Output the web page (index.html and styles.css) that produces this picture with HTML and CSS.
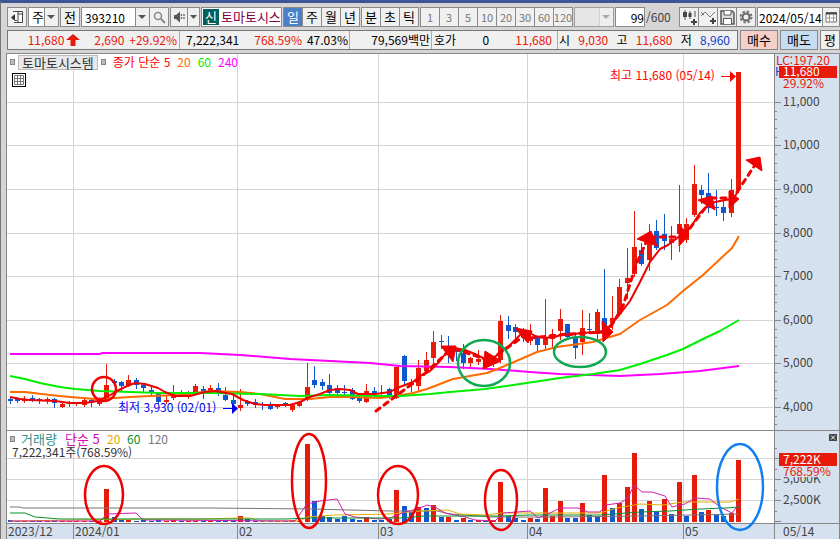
FILE: index.html
```html
<!DOCTYPE html>
<html lang="ko">
<head>
  <meta charset="UTF-8" />
  <meta name="viewport" content="width=device-width, initial-scale=1.0" />
  <title>토마토시스템 차트</title>
  <link rel="stylesheet" href="styles.css">
</head>
<body>

<div class="toolbar">
  <button class="icon-btn w20" aria-label="패널 접기"><svg width="14" height="14" viewBox="0 0 14 14"><path d="M3 1.5H12.5V12.5H4" fill="#fff" stroke="#444"/><path d="M8 1.5V12M8 4h4" stroke="#444" fill="none"/><path d="M5 4v7L1 7.500z" fill="#333"/><path d="M5 10.500h2" stroke="#444"/></svg></button>
  <span class="combo w31"><select aria-label="종목 구분"><option>주</option></select></span>
  <button class="btn w20">전</button>
  <span class="group">
    <span class="combo w69"><input type="text" value="393210" aria-label="종목코드" /></span><button class="icon-btn w20" aria-label="종목 검색"><svg width="13" height="13" viewBox="0 0 13 13"><circle cx="5" cy="5" r="3.500" fill="none" stroke="#888" stroke-width="1.500"/><path d="M8 8l4 4" stroke="#888" stroke-width="2"/></svg></button>
  </span>
  <span class="group">
    <button class="icon-btn w18" aria-label="소리"><svg width="13" height="12" viewBox="0 0 13 12"><path d="M1 4h2l4-3.500v11L3 8H1z" fill="#555"/><path d="M8.500 3v6M11 3v6" stroke="#777" stroke-width="1.500" stroke-dasharray="2 1"/></svg></button><button class="icon-btn w11" aria-label="소리 설정"><svg width="7" height="4" viewBox="0 0 7 4"><path d="M0 0h7L3.500 4z" fill="#555"/></svg></button>
  </span>
  <div class="stock-name"><b>신</b><span>토마토시스</span></div>
  <span class="group">
    <button class="btn w20 on">일</button><button class="btn w20">주</button><button class="btn w20">월</button><button class="btn w20">년</button>
  </span>
  <span class="group">
    <button class="btn w20">분</button><button class="btn w20">초</button><button class="btn w20">틱</button>
  </span>
  <span class="group minutes">
    <button class="btn w20">1</button><button class="btn w20">3</button><button class="btn w20">5</button><button class="btn w20">10</button><button class="btn w20">20</button><button class="btn w20">30</button><button class="btn w20">60</button><button class="btn w20">120</button>
  </span>
  <span class="combo w40 off"><select aria-label="분 선택" disabled><option></option></select></span>
  <input class="count" type="text" value="99" aria-label="봉 개수" />
  <span class="total">/600</span>
  <span class="group">
    <button class="icon-btn w20" aria-label="차트 추가"><svg width="15" height="15" viewBox="0 0 15 15"><path d="M3 0v10M8 1v8M13 1v6" stroke="#555"/><path d="M1 2h4v5H1zM6.500 3h3v4h-3z" fill="#444"/><path d="M12 9v6M9 12h6" stroke="#444" stroke-width="2"/></svg></button><button class="icon-btn w20" aria-label="지표 추가"><svg width="15" height="15" viewBox="0 0 15 15"><path d="M0 6l4-4 5 5 5-5M0 2l3 3" stroke="#777" fill="none"/><path d="M12 8v6M9 11h6" stroke="#444" stroke-width="2"/></svg></button><button class="icon-btn w20" aria-label="저장"><svg width="15" height="15" viewBox="0 0 15 15"><path d="M1 1h11l2 2v11H1z" fill="#ddd" stroke="#555" stroke-width="1.500"/><path d="M4 1v4h7V1M3.500 14V8.500h8V14" fill="#fff" stroke="#555"/></svg></button><button class="icon-btn w20" aria-label="설정"><svg width="14" height="14" viewBox="0 0 14 14"><circle cx="7" cy="7" r="5.500" fill="none" stroke="#777" stroke-width="2" stroke-dasharray="2.500 1.820"/><circle cx="7" cy="7" r="3.500" fill="none" stroke="#666" stroke-width="2"/></svg></button>
  </span>
  <span class="group grow">
    <input class="date" type="text" value="2024/05/14" aria-label="날짜" /><button class="icon-btn w18" aria-label="달력"><svg width="13" height="12" viewBox="0 0 13 12"><path d="M1 1.500h10.500v9.500H1z" fill="#fff" stroke="#777"/><path d="M1 2.500h11" stroke="#444" stroke-width="2"/><path d="M1 7h11M4.500 3v8M8.500 3v8" stroke="#999"/></svg></button>
  </span>
</div>

<div class="quote">
  <div class="cells">
    <div class="cell price up"><span>11,680</span><svg width="14" height="12" viewBox="0 0 14 12"><path d="M7 0l7 6H9.500v6h-5V6H0z" fill="#e81a0a"/></svg><span class="diff">2,690</span><span>+29.92%</span></div>
    <div class="cell volume"><span>7,222,341</span><span class="up">768.59%</span><span>47.03%</span></div>
    <div class="cell amount"><span>79,569백만</span></div>
    <div class="cell hoga"><span>호가</span><span>0</span><span class="up">11,680</span></div>
    <div class="cell ohl"><span>시</span><span class="up">9,030</span><span>고</span><span class="up">11,680</span><span>저</span><span class="down">8,960</span></div>
  </div>
  <button class="trade buy">매수</button>
  <button class="trade sell">매도</button>
  <button class="trade avg">평</button>
</div>

<div class="chart">
  <svg id="chart" viewBox="7 54 833 485" role="img" aria-label="일봉 차트"></svg>
  <div class="legend">
    <i class="dot"></i><span class="tag">토마토시스템</span><i class="dot"></i>
    <span class="c-red">종가 단순 5</span><span class="c-orange">20</span><span class="c-lime">60</span><span class="c-pink">240</span>
  </div>
  <button class="grid-btn" aria-label="표 보기"><svg width="10" height="10" viewBox="0 0 10 10"><path d="M.500.500h9v9h-9zM.500 3.500h9M.500 6.500h9M3.500.500v9M6.500.500v9" fill="#fff" stroke="#777"/></svg></button>
</div>

<script src="chart.js"></script>
</body>
</html>
```
FILE: styles.css
```css
* { box-sizing: border-box; }
body {
  margin: 0;
  padding-left: 6px;
  background: #d6d4d4;
  border-top: 3px solid #3c5596;
  border-left: 1px solid #777;
  font-family: "Noto Sans CJK KR", sans-serif;
  font-size: 12px;
  line-height: 16px;
  color: #000;
  overflow: hidden;
}
button, input, select {
  margin: 0;
  padding: 0;
  font: inherit;
  color: inherit;
  border: 1px solid #8a8a8a;
  border-radius: 0;
  background: #f0f0f0;
}
svg { display: block; }

/* toolbar */
.toolbar { display: flex; gap: 1px; padding-top: 4px; height: 24px; }
.toolbar > * { height: 20px; flex: none; }
.group { display: flex; }
.group > * { height: 20px; }
.group > * + * { margin-left: -1px; }
.icon-btn { display: flex; align-items: center; justify-content: center; flex: none; }
.btn { font-size: 13px; text-align: center; white-space: nowrap; }
.btn.on { background: #4a80c8; color: #fff; }
.w11 { width: 13px; }
.w18 { width: 18px; }
.w20 { width: 20px; }
.w31 { width: 31px; font-size: 13px; }
.w40 { width: 40px; }
.w69 { width: 69px; }
.minutes { color: #777; }
.minutes .btn { display: flex; align-items: center; justify-content: center; font-size: 11px; }
.combo { position: relative; display: block; }
.combo select, .combo input {
  width: 100%;
  height: 20px;
  padding-left: 3px;
  background: #fff;
  appearance: none;
}
.combo::before {
  content: "";
  position: absolute;
  top: 1px; right: 1px; bottom: 1px;
  width: 13px;
  background: #f0f0f0;
  border-left: 1px solid #8a8a8a;
}
.combo::after {
  content: "";
  position: absolute;
  top: 8px; right: 4px;
  border: 4px solid transparent;
  border-top-color: #555;
  border-bottom: 0;
}
.combo.off select { background: #eee; }
.combo.off::after { border-top-color: #aaa; }
.stock-name {
  display: flex;
  width: 81px;
  padding: 1px 0 1px 1px;
  overflow: hidden;
  white-space: nowrap;
  background: #fff;
  border: 1px solid #8a8a8a;
  color: #800040;
  font-size: 13px;
}
.stock-name b { width: 16px; margin-right: 2px; background: #006060; color: #fff; font-weight: 400; text-align: center; }
.count { width: 30px; background: #fff; text-align: right; }
.total { width: 32px; padding-top: 2px; color: #444; }
.toolbar .grow { flex: 1; min-width: 0; }
.date { flex: 1; min-width: 0; padding-left: 1px; background: #fff; }

/* quote row */
.quote { display: flex; gap: 2px; height: 26px; padding-top: 3px; }
.quote > * { height: 20px; }
.cells { display: flex; flex: 1; background: #f0f0f0; border: 1px solid #777; line-height: 18px; white-space: nowrap; }
.cell { display: flex; align-items: center; justify-content: flex-end; border-right: 1px solid #aaa; }
.cell:last-child { border-right: 0; }
.price { width: 172px; padding-right: 2px; gap: 2px; }
.diff { margin-left: 12px; margin-right: 3px; }
.volume { width: 170px; padding-right: 1px; gap: 5px; }
.volume .up { margin-left: 10px; }
.amount { width: 82px; padding-right: 1px; }
.hoga { width: 126px; padding: 0 5px 0 2px; justify-content: space-between; }
.ohl { flex: 1; padding: 0 7px 0 1px; justify-content: space-between; }
.up { color: #e81a0a; }
.down { color: #1040c8; }
.trade { width: 38px; font-size: 13px; }
.trade.buy { background: #f5cfca; }
.trade.sell { background: #c5dcf3; }
.trade.avg { width: 20px; }

/* chart */
.chart { position: relative; background: #fff; border-top: 1px solid #888; border-left: 1px solid #888; margin-left: -1px; }
#chart { width: 100%; height: auto; }
#chart text { font-size: 12px; }
#chart .ko { font-size: 13px; }
.legend { position: absolute; top: 0; left: 3px; display: flex; align-items: center; gap: 7px; height: 16px; white-space: nowrap; }
.dot { width: 5px; height: 6px; background: #bbb; border: 1px solid #888; }
.tag { margin: 0 -4px; padding: 0 3px; font-size: 13px; line-height: 13px; background: #e8e8e8; border: 1px solid #bbb; color: #333; }
.c-red { color: #f00; }
.c-orange { color: #ff6a00; }
.c-lime { color: #0e0; }
.c-pink { color: #f0f; }
.grid-btn { position: absolute; top: 19px; left: 5px; width: 14px; height: 14px; padding: 1px; border-color: #000; background: #fff; }
```
FILE: chart.js
```javascript
const RED = "#e81a0a", BLUE = "#1058d0";

// color, high, body top, body bottom, low
const candles = `b397,399,401,403 b397,399,401,402 r396,399,401,402 b395,398,401,401 b398,399,400,403 r397,399,400,403
b398,399,403,407 r403,404,407,407 r401,403,404,406 r402,403,404,405 r398,400,405,406 b399,400,403,406 r397,400,404,405
r364,385,400,401 b379,381,383,385 b381,382,386,390 r375,380,385,386 b378,380,385,388 b384,385,388,391 b386,390,393,395
b392,393,402,403 r395,400,402,403 r385,393,398,399 b390,392,395,396 r391,392,397,398 r384,386,392,393 b386,389,394,398
r385,388,391,393 b383,388,394,395 b387,395,400,400 b395,400,404,409 r389,405,408,410 b400,401,404,405 b399,402,405,407
b402,404,405,409 b402,404,409,409 r404,405,407,408 b402,403,405,406 r403,405,410,411 r401,402,406,406 r363,387,400,400
b366,380,385,387 b379,382,386,389 b374,385,393,394 b385,388,393,395 b385,392,393,396 b388,390,399,399 b395,397,401,402
r384,391,402,402 b387,391,394,396 b385,393,394,397 b388,389,397,398 r365,367,398,398 b355,356,381,384 b379,383,385,391
r360,368,386,391 r352,360,371,372 r331,342,358,362 b335,341,342,348 b336,346,354,362 b348,351,352,360 b344,353,363,368
r357,358,363,367 r350,359,362,364 b356,358,366,368 r356,358,364,366 r315,321,360,362 b316,325,331,338 b324,327,332,338
b328,332,337,341 r324,337,341,344 b336,337,345,351 r299,337,345,348 r329,334,339,347 r309,319,331,339 b324,324,337,338
b335,337,348,358 r310,328,342,354 b313,329,330,333 r309,312,334,339 b269,318,330,333 r296,318,323,329 r279,287,314,315
r248,278,283,298 r211,247,274,276 b243,250,264,265 r224,240,260,270 b220,231,248,249 b214,234,241,249 r226,239,243,259
r185,224,234,251 r218,224,240,242 r165,184,215,216 b185,190,195,203 b173,193,208,212 b190,207,208,215 b200,207,213,220
r179,190,213,216 r72,72,190,192`.split(/\s+/);

// volume bar heights
const volumes = [2,1,1,1,1,1,2,1,1,1,1,1,1,33,5,2,2,1,2,1,2,1,2,1,1,1,1,1,1,2,2,6,3,1,1,1,1,1,2,1,
  78,21,6,5,3,6,3,2,5,2,2,3,32,16,10,15,14,17,5,5,2,4,2,2,1,2,40,6,4,2,4,3,34,6,21,4,4,19,7,6,
  47,14,19,35,69,13,21,10,23,8,40,6,47,10,12,7,6,9,62];

// days whose volume bar has the other color than the candle
const flipped = [56, 59, 61, 62, 79, 80, 81, 88, 89, 91, 94];

const lines = [
  ["#f0f", 2, "10,354 100,354 102,353 200,353 240,355 290,359 330,361 370,363 400,366 450,367 490,369 530,372 560,374 620,376 660,374 700,371 739,366"],
  ["#ff6a00", 2, "10,392 25,392 50,395 70,397 95,399 115,398 130,397 150,396 180,395 210,391 240,392 260,394 285,399 310,399 330,397 350,397 380,398 397,396 413,393 427,389 453,379 487,373 500,368 537,352 557,347 593,342 620,334 640,320 667,305 683,291 703,275 732,248 739,236"],
  ["#0e0", 2, "10,376 25,379 40,383 60,387 75,389 100,391 130,392 160,393 210,393 260,394 300,396 330,395 380,396 400,396 430,394 450,392 485,389 520,384 560,378 593,374 620,370 640,364 667,355 683,349 703,339 720,331 739,320"],
  ["#e00", 2, "10,397 20,399 30,400 55,401 70,403 85,403 97,401 107,397 117,391 127,386 135,383 145,384 158,388 165,392 175,396 190,396 205,392 215,391 232,394 243,400 255,404 265,405 290,405 300,402 310,397 320,394 330,390 340,389 350,390 358,394 375,394 390,392 397,388 405,385 413,382 420,376 430,371 440,361 448,350 455,348 465,350 475,354 485,359 492,360 500,352 510,345 520,335 527,331 535,336 545,338 555,337 563,334 570,335 580,333 600,332 608,328 620,314 630,301 640,282 650,262 660,249 668,245 680,236 690,228 700,213 708,205 715,202 725,200 733,199 739,190"],
  ["#777", 1, "10,507 20,507 23,508 210,508 310,509 390,511 437,511 450,514 490,517 560,517 640,516 690,515 738,514"],
  ["#e0b000", 1, "10,521 140,519 200,519 240,518 250,518 260,521 300,521 307,517 335,515 390,514 410,512 420,511 448,510 460,514 487,515 500,513 600,513 617,508 640,504 663,505 683,502 730,502 739,499"],
  ["#d020b0", 1, "10,521 100,521 107,514 136,513 143,520 295,521 307,504 320,501 337,499 345,514 355,517 380,519 390,518 405,512 410,511 420,508 427,505 435,507 445,513 465,517 475,520 495,521 503,513 530,511 538,518 550,513 560,508 578,508 588,512 600,512 606,505 620,503 628,498 634,485 642,492 652,492 665,496 672,507 685,504 695,498 710,499 720,507 732,513 739,504"],
  ["#089030", 1, "10,513 25,513 35,517 60,519 285,519 310,518 400,518 425,516 500,516 530,515 600,515 640,512 670,511 700,509 725,508 739,507"]
];

// dashed trend arrows drawn by hand over the chart
const trends = ["376,411 420,378 449,351", "455,349 488,360", "490,360 524,336", "530,338 570,334 603,332", "606,335 623,306 636,265 648,238", "650,237 681,237", "684,236 709,203", "711,198 734,198", "737,192 755,165"];
const heads = ["441,346 456,346 453,362", "483,369 485,351 501,361", "515,328 532,331 528,343", "602,321 613,332 603,342", "637,239 651,231 657,246", "679,225 689,235 679,246", "698,200 712,196 715,210", "729,191 739,199 729,208", "746,160 760,157 762,171"];

const rings = [
  [104, 389, 12, 12, "#f00000"], [484, 363, 26, 23, "#10a850"], [580, 352, 26, 15, "#10a850"],
  [104, 495, 19, 29, "#f00000"], [309, 481, 17, 47, "#f00000"], [398, 495, 20, 29, "#f00000"],
  [501, 500, 16, 30, "#f00000"], [740, 487, 23, 43, "#1080f0"]
];

let out = "";
const rect = (x, y, w, h, c) => { out += `<rect x="${x}" y="${y}" width="${w}" height="${h}" fill="${c}" shape-rendering="crispEdges"/>`; };
const text = (x, y, s, c, cls = "") => { out += `<text x="${x}" y="${y}" fill="${c}" class="${cls}">${s}</text>`; };
const xAt = i => Math.floor(10 + i * 7.435);

rect(774, 54, 66, 485, "#d6e1ef");
rect(7, 523, 833, 16, "#d6e1ef");

[73, 237, 378, 527, 683].forEach(x => { rect(x, 54, 1, 469, "#d4d4d4"); rect(x, 523, 1, 16, "#888"); });
for (let p = 4; p <= 11; p++) rect(7, Math.round(407 - (p - 4) * 43.6), 766, 1, "#d4d4d4");
[458, 479, 500].forEach(y => rect(7, y, 766, 1, "#d4d4d4"));

rect(7, 430, 833, 1, "#888");
rect(7, 523, 833, 1, "#888");
rect(774, 54, 1, 485, "#888");
rect(839, 54, 1, 485, "#888");

// axis ticks
for (let k = -2; k <= 35; k++) {
  const y = Math.round(407 - k * 8.72);
  rect(775, y, k % 5 ? 2 : 6, 1, "#888");
}
[448, 458, 469, 479, 490, 500, 511, 521].forEach((y, i) => rect(775, y, i % 2 ? 6 : 2, 1, "#888"));

for (let p = 4; p <= 11; p++) text(783, Math.round(411 - (p - 4) * 43.6), p + ",000", "#444");
text(783, 462, "7,500K", "#444");
text(783, 483, "5,000K", "#444");
text(783, 504, "2,500K", "#444");
["2023/12|8", "2024/01|75", "02|239", "03|380", "04|529", "05|685", "05/14|783"].forEach(s => {
  const [label, x] = s.split("|");
  text(x, 536, label, "#444");
});

// volume bars and candles
candles.forEach((s, i) => {
  const x = xAt(i), up = s[0] === "r", c = up ? RED : BLUE;
  const [hi, top, bottom, lo] = s.slice(1).split(",").map(Number);
  rect(x - 2, 522 - volumes[i], 5, volumes[i], up !== flipped.includes(i) ? RED : BLUE);
  rect(x, hi, 1, lo - hi + 1, c);
  rect(x - 2, top, 5, Math.max(bottom - top, 1), c);
});

lines.forEach(([c, w, pts]) => { out += `<polyline points="${pts}" fill="none" stroke="${c}" stroke-width="${w}" stroke-linejoin="round"/>`; });
trends.forEach(pts => { out += `<polyline points="${pts}" fill="none" stroke="#f00000" stroke-width="3" stroke-dasharray="5 5" stroke-linecap="round"/>`; });
heads.forEach(pts => { out += `<polygon points="${pts}" fill="#f00000" stroke="#f00000" stroke-linejoin="round"/>`; });

// high / low marks
text(610, 80, "최고 11,680 (05/14)", "#f00");
out += `<path d="M721 76.500h9" stroke="#f00"/><path d="M730 71l6 5.500-6 5.500z" fill="#f00"/>`;
text(118, 412, "최저 3,930 (02/01)", "#00e");
out += `<path d="M223 408.500h9" stroke="#00e"/><path d="M232 403l6 5.500-6 5.500z" fill="#00e"/>`;

// current price and volume tags
text(776, 65, "LC:197.20", RED);
text(775, 76, "H", "#1040c8");
rect(779, 66, 58, 12, RED);
text(783, 76, "11,680", "#fff");
text(783, 88, "29.92%", RED);
rect(779, 453, 58, 13, RED);
text(783, 464, "7,222K", "#fff");
rect(779, 466, 58, 11, "#d6e1ef");
text(783, 476, "768.59%", RED);

// volume legend
out += `<rect x="10.500" y="436.500" width="4" height="5" fill="#bbb" stroke="#888"/>`;
text(21, 444, "거래량", "#309090", "ko");
text(65, 444, "단순 5", "#d010b0", "ko");
text(107, 444, "20", "#e8a800");
text(127, 444, "60", "#089030");
text(148, 444, "120", "#777");
text(12, 457, "7,222,341주(768.59%)", "#333");
out += `<rect x="829" y="434" width="8" height="7" fill="#444"/><path d="M831 435.500l4 4M835 435.500l-4 4" stroke="#fff"/>`;

rings.forEach(([x, y, rx, ry, c]) => { out += `<ellipse cx="${x}" cy="${y}" rx="${rx}" ry="${ry}" fill="none" stroke="${c}" stroke-width="2.500"/>`; });

document.getElementById("chart").innerHTML = out;
```
